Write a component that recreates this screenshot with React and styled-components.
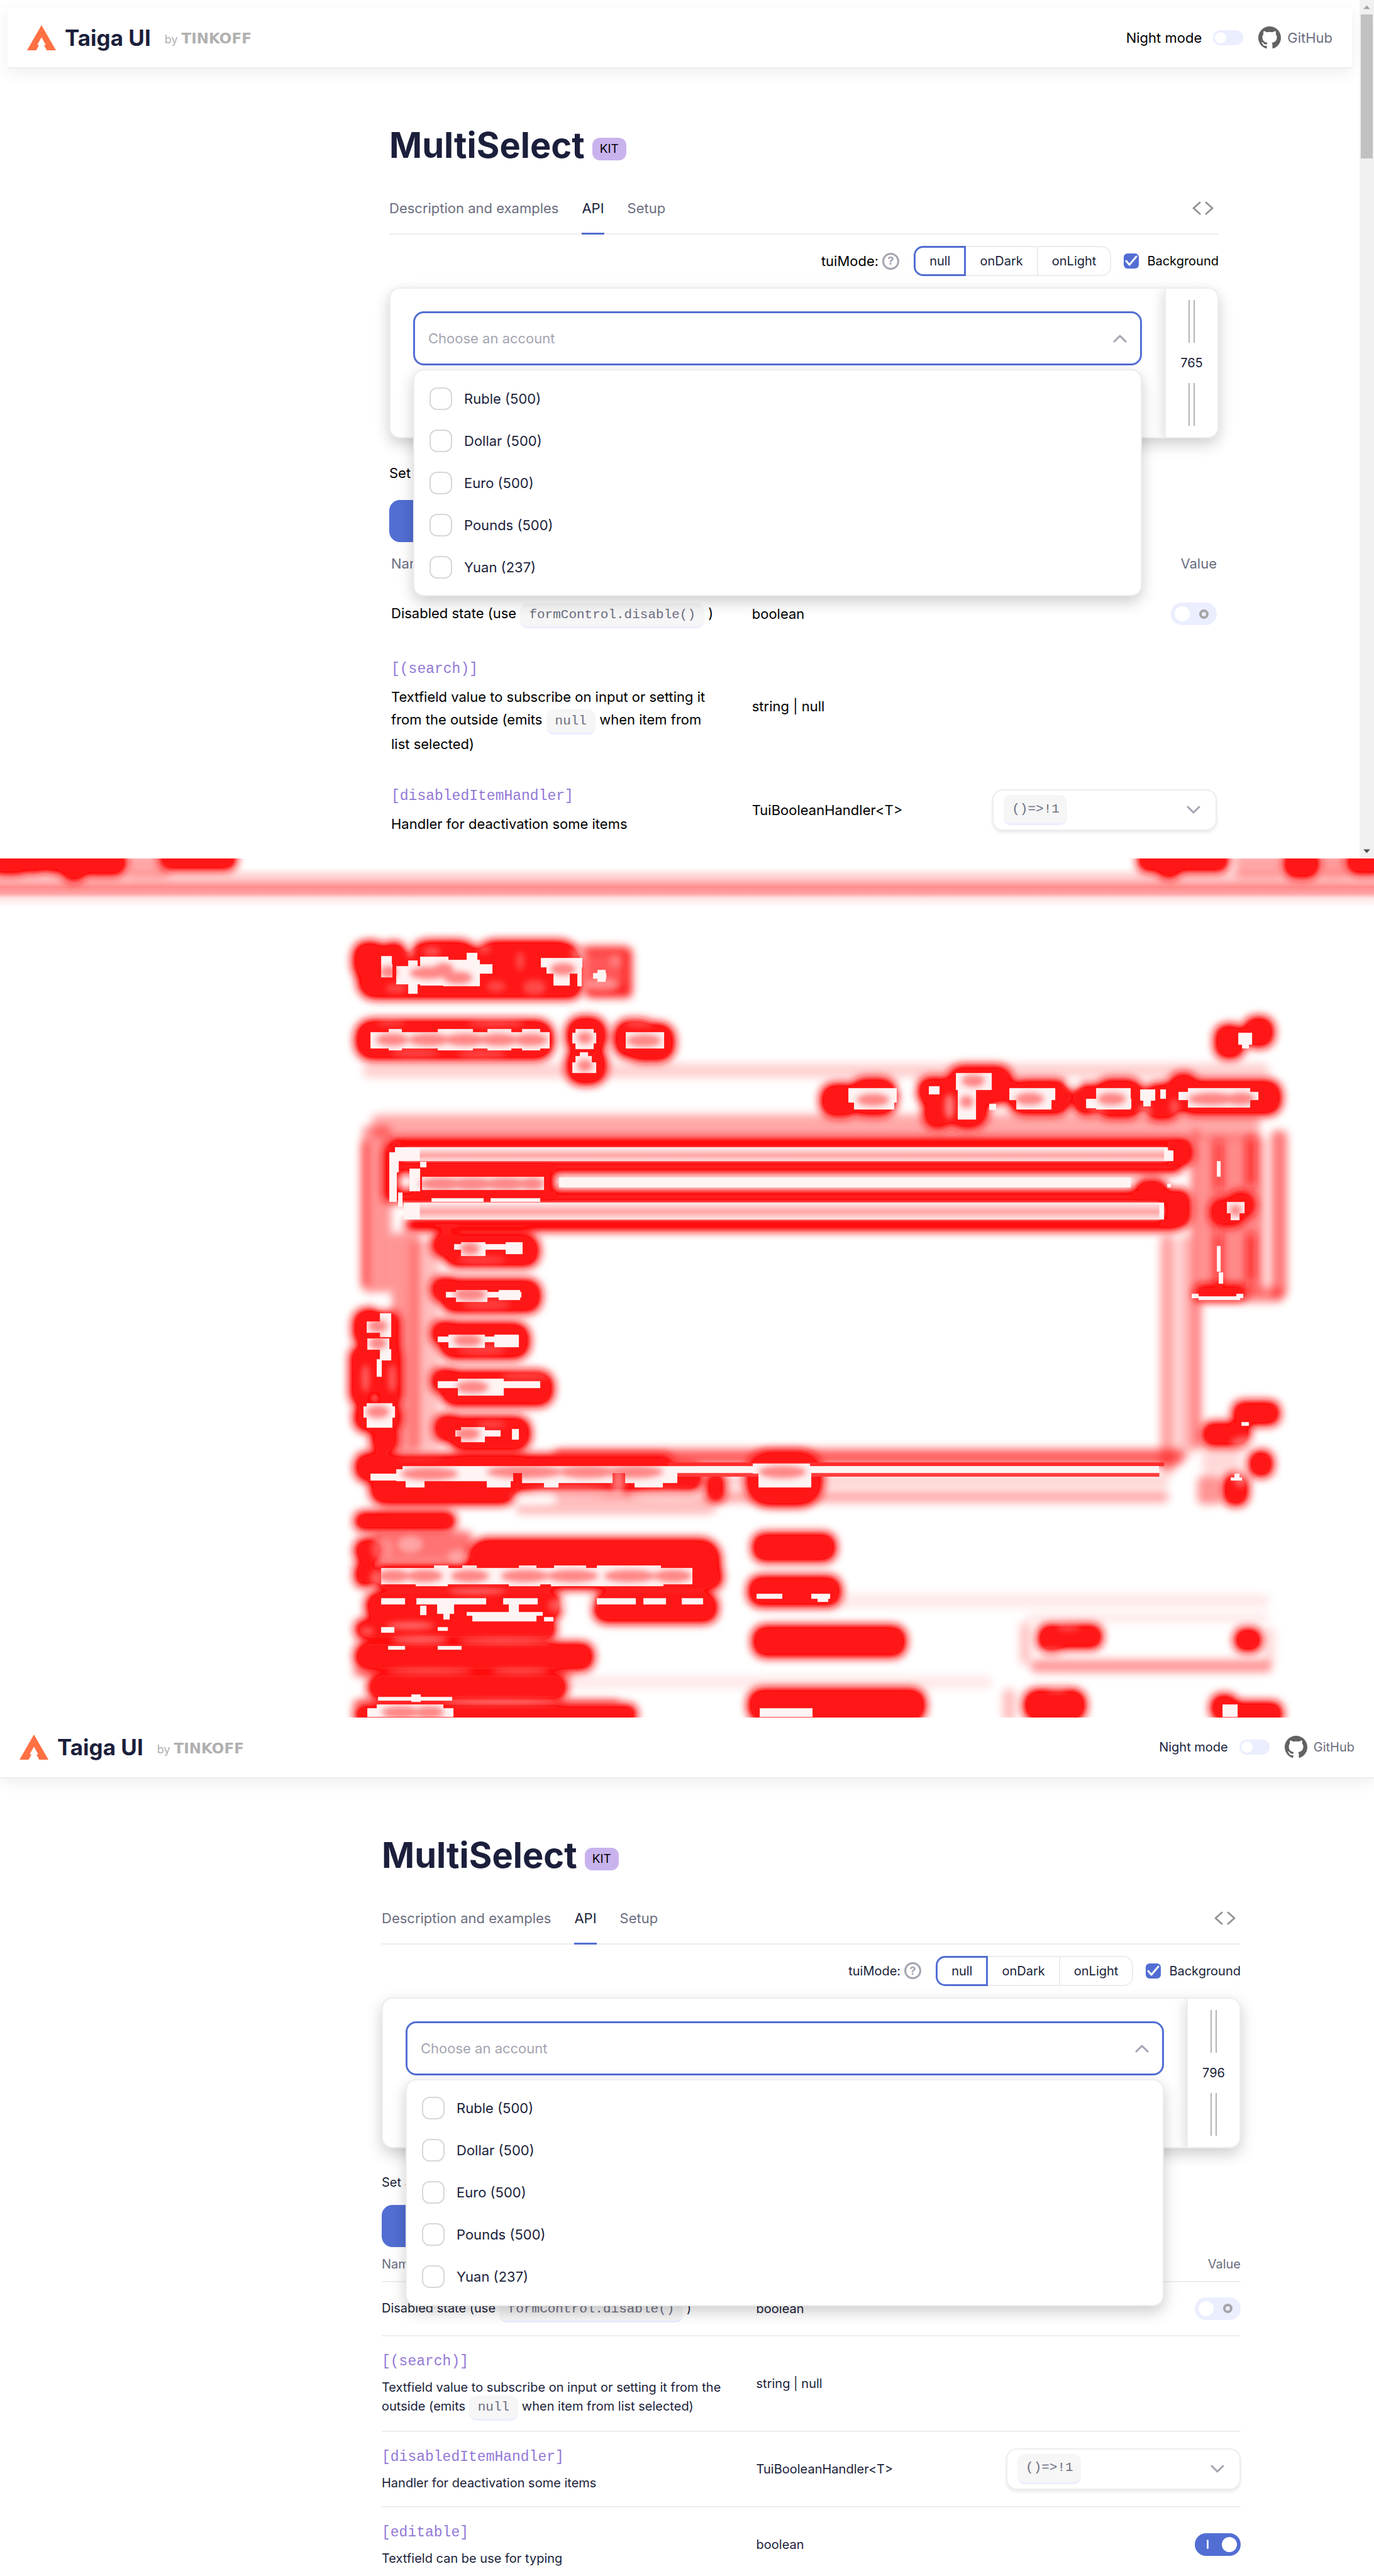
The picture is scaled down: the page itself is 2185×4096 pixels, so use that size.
import React, { useId } from "react";
import styled, { createGlobalStyle, css } from "styled-components";

const color = {
  ink: "#1b1f3b",
  muted: "#6b6e80",
  faint: "#a4a5b1",
  line: "#ededed",
  primary: "#526ed3",
  soft: "#ebeeff",
  purple: "#9278d6",
};

const sans = `Inter, "Open Sans", "Liberation Sans", sans-serif`;
const mono = `"Liberation Mono", "DejaVu Sans Mono", monospace`;

const GlobalStyle = createGlobalStyle`
  *, *::before, *::after { box-sizing: border-box; }
  html, body { margin: 0; background: #fff; }
  body { font-family: ${sans}; color: ${color.ink}; overflow: hidden; }
  input, button, select { font: inherit; margin: 0; }
`;

const Report = styled.main`
  display: grid;
  grid-template-rows: repeat(3, minmax(0, 1fr));
  height: 100vh;
  background: #fff;
`;

const Frame = styled.section`
  display: flex;
  min-height: 0;
  overflow: hidden;
  background: #fff;
`;

const Page = styled.div`
  flex: 1;
  min-width: 0;
`;

/* ---------- scrollbar ---------- */

const ScrollTrack = styled.div`
  flex: none;
  width: 23px;
  display: flex;
  flex-direction: column;
  align-items: center;
  justify-content: space-between;
  background: #f1f1f1;
`;

const ScrollTop = styled.div`
  display: grid;
  justify-items: center;
`;

const ScrollArrow = styled.svg`
  display: block;
  width: 23px;
  height: 23px;
`;

const ScrollThumb = styled.div`
  width: 19px;
  height: 229px;
  background: #c1c1c1;
`;

/* ---------- header ---------- */

const Header = styled.header`
  display: flex;
  align-items: center;
  height: 97px;
  margin: ${(p) => (p.$inset ? "12px 12px 0" : "0")};
  padding: 0 31px;
  background: #fff;
  border-bottom: 2px solid ${color.line};
  box-shadow: 0 6px 24px rgba(0, 0, 0, 0.07);
`;

const Brand = styled.a`
  display: flex;
  align-items: center;
  gap: 14px;
  color: ${color.ink};
  text-decoration: none;
  font-size: 35px;
  font-weight: 700;
  line-height: 40px;
`;

const BrandMark = styled.svg`
  width: 46px;
  height: 40px;
`;

const Owner = styled.span`
  display: flex;
  align-items: baseline;
  gap: 6px;
  margin-left: 8px;
  padding-top: 5px;
  color: #b0b0b0;
  font-size: 18px;
  font-weight: 400;
  line-height: 30px;
`;

const OwnerName = styled.b`
  font-family: "DejaVu Sans", sans-serif;
  font-size: 23px;
`;

const HeaderTools = styled.div`
  display: flex;
  align-items: center;
  margin-left: auto;
  font-size: ${(p) => (p.$compact ? 20 : 22)}px;
`;

const NightLabel = styled.label`
  display: flex;
  align-items: center;
  gap: 18px;
  color: ${(p) => (p.$compact ? color.ink : "#000")};
`;

const GitLink = styled.a`
  display: flex;
  align-items: center;
  gap: 10px;
  margin-left: 24px;
  color: ${color.muted};
  text-decoration: none;
`;

const GitMark = styled.svg`
  width: 36px;
  height: 36px;
  fill: #626262;
`;

const Switch = styled.input.attrs({ type: "checkbox", role: "switch" })`
  appearance: none;
  flex: none;
  display: flex;
  align-items: center;
  justify-content: space-between;
  border-radius: 18px;
  background: ${color.soft};
  &::before {
    content: "";
    border-radius: 50%;
    background: #fff;
  }
  ${(p) =>
    p.$small
      ? css`
          width: 48px;
          height: 24px;
          padding: 0 3px;
          &::before {
            width: 18px;
            height: 18px;
          }
        `
      : css`
          width: 73px;
          height: 36px;
          padding: 0 6px;
          &::before {
            width: 24px;
            height: 24px;
          }
          &::after {
            content: "";
            width: 15px;
            height: 15px;
            margin: 0 7px;
            border: 4px solid #a5a5a8;
            border-radius: 50%;
          }
        `}
  &:checked {
    background: ${color.primary};
    flex-direction: row-reverse;
  }
  &:checked::after {
    width: 3px;
    margin: 0 13px;
    border: 0;
    border-radius: 2px;
    background: #e3e8fb;
  }
`;

/* ---------- article ---------- */

const Article = styled.article`
  padding: 92px ${(p) => (p.$compact ? "212px 0 607px" : "224px 0 619px")};
`;

const TitleRow = styled.div`
  display: flex;
  align-items: flex-end;
  gap: 12px;
`;

const Title = styled.h1`
  margin: 0;
  font-size: 56px;
  font-weight: 700;
  line-height: 60px;
`;

const Badge = styled.span`
  margin-bottom: 6px;
  padding: 0 12px;
  border-radius: 12px;
  background: #c9b3ed;
  color: #000;
  font-size: 19px;
  line-height: 36px;
`;

const Tabs = styled.nav`
  display: flex;
  gap: 37px;
  height: 84px;
  margin-top: 28px;
  box-shadow: inset 0 -2px ${color.line};
  font-size: 22px;
`;

const Tab = styled.a`
  display: flex;
  align-items: center;
  text-decoration: none;
  color: ${(p) => (p.$active ? color.ink : color.muted)};
  box-shadow: ${(p) => (p.$active ? `inset 0 -3px ${color.primary}` : "none")};
`;

const CodeButton = styled.button`
  margin-left: auto;
  padding: 0 8px;
  border: 0;
  background: none;
  line-height: 0;
`;

const Icon = styled.svg`
  display: block;
  flex: none;
  fill: none;
  stroke: ${(p) => p.$stroke || color.faint};
  stroke-width: ${(p) => p.$weight || 3};
  stroke-linecap: round;
  stroke-linejoin: round;
`;

const ModeRow = styled.div`
  display: flex;
  align-items: center;
  justify-content: flex-end;
  height: 48px;
  margin: 18px 0;
  font-size: 20px;
`;

const ModeName = styled.span`
  display: flex;
  align-items: center;
  gap: 6px;
  margin-right: 23px;
  color: ${(p) => (p.$compact ? color.ink : "#000")};
  font-size: ${(p) => (p.$compact ? 20 : 22)}px;
`;

const Help = styled.span`
  display: grid;
  place-items: center;
  width: 27px;
  height: 27px;
  border: 3px solid ${color.faint};
  border-radius: 50%;
  color: ${color.faint};
  font-size: 18px;
  font-weight: 700;
  line-height: 18px;
`;

const Segments = styled.div`
  display: flex;
  height: 48px;
`;

const Segment = styled.label`
  display: flex;
  align-items: center;
  padding: 0 22px;
  border: 2px solid ${color.line};
  border-left-width: 0;
  &:first-child {
    border-radius: 15px 0 0 15px;
  }
  &:last-child {
    border-radius: 0 15px 15px 0;
  }
  &:has(:checked) {
    border: 3px solid ${color.primary};
  }
`;

const HiddenRadio = styled.input.attrs({ type: "radio" })`
  position: absolute;
  opacity: 0;
`;

const CheckLabel = styled.label`
  display: flex;
  align-items: center;
  gap: 13px;
  margin-left: 20px;
  color: ${(p) => (p.$compact ? color.ink : "#000")};
`;

const CheckMark = styled.span`
  display: grid;
  width: 24px;
  height: 24px;
  & > * {
    grid-area: 1 / 1;
  }
`;

const CheckInput = styled.input.attrs({ type: "checkbox" })`
  appearance: none;
  width: 24px;
  height: 24px;
  border-radius: 6px;
  background: ${color.primary};
`;

/* ---------- demo ---------- */

const Demo = styled.section`
  display: flex;
  height: 240px;
  border: 2px solid ${color.line};
  border-radius: 17px;
  background: #fff;
  box-shadow: 0 9px 24px rgba(0, 0, 0, 0.2);
`;

const DemoMain = styled.div`
  position: relative;
  flex: 1;
  padding: 36px;
`;

const Field = styled.label`
  display: flex;
  align-items: center;
  height: 86px;
  padding: 0 21px;
  border: 3px solid ${color.primary};
  border-radius: 17px;
`;

const FieldInput = styled.input`
  flex: 1;
  min-width: 0;
  padding: 0;
  border: 0;
  outline: 0;
  background: none;
  font-size: 22px;
  &::placeholder {
    color: ${color.faint};
    opacity: 1;
  }
`;

const Dropdown = styled.div`
  position: absolute;
  z-index: 2;
  top: 128px;
  left: 36px;
  right: 36px;
  padding: 11px 0;
  border: 2px solid ${color.line};
  border-radius: 17px;
  background: #fff;
  box-shadow: 0 9px 24px rgba(0, 0, 0, 0.2);
`;

const Option = styled.label`
  display: flex;
  align-items: center;
  gap: 19px;
  height: 67px;
  padding: 0 24px;
  font-size: 22px;
`;

const OptionBox = styled.input.attrs({ type: "checkbox" })`
  appearance: none;
  width: 36px;
  height: 36px;
  border: 2px solid #d8d8d8;
  border-radius: 12px;
  background: #fff;
`;

const Resizer = styled.aside`
  flex: none;
  display: flex;
  flex-direction: column;
  align-items: center;
  justify-content: space-between;
  width: 84px;
  padding: 18px 0;
  border-left: 2px solid ${color.line};
  border-radius: 0 15px 15px 0;
  background: #fff;
  box-shadow: -5px 4px 18px rgba(0, 0, 0, 0.12);
  clip-path: inset(0 0 0 -36px round 15px);
  font-size: 20px;
  line-height: 24px;
`;

const Grip = styled.span`
  width: 10px;
  height: 68px;
  border: solid #b4b4b4;
  border-width: 0 2px;
`;

/* ---------- api table ---------- */

const SetNote = styled.p`
  margin: ${(p) => (p.$compact ? "39px 0 21px" : "37px 0 25px")};
  color: ${(p) => (p.$compact ? color.ink : "#000")};
  font-size: ${(p) => (p.$compact ? 20 : 22)}px;
  line-height: ${(p) => (p.$compact ? 30 : 36)}px;
`;

const SetButton = styled.button`
  display: block;
  width: 360px;
  height: 67px;
  border: 0;
  border-radius: 17px;
  background: ${color.primary};
`;

const Table = styled.table`
  width: 100%;
  table-layout: fixed;
  border-collapse: collapse;
  color: ${(p) => (p.$compact ? color.ink : "#000")};
  font-size: ${(p) => (p.$compact ? 20 : 22)}px;
  line-height: ${(p) => (p.$compact ? 30 : 36)}px;
  th,
  td {
    padding: 0 ${(p) => (p.$compact ? 0 : 3)}px;
    text-align: left;
    vertical-align: middle;
    border-bottom: ${(p) => (p.$compact ? `2px solid ${color.line}` : "0")};
  }
  th {
    height: ${(p) => (p.$compact ? 55 : 68)}px;
    color: ${color.muted};
    font-weight: 400;
  }
  th:last-child {
    text-align: right;
  }
  th:first-child,
  td:first-child {
    padding-right: 48px;
  }
`;

const Row = styled.tr`
  height: ${(p) => p.$height}px;
`;

const PropName = styled.div`
  margin-bottom: 8px;
  color: ${color.purple};
  font-family: ${mono};
  font-size: 23px;
  line-height: 36px;
`;

const Code = styled.code`
  padding: 7px 14px;
  border-bottom: 3px solid ${color.soft};
  border-radius: 12px;
  background: #f6f6f6;
  color: ${color.muted};
  font-family: ${mono};
  font-size: 21px;
`;

const ValueSlot = styled.div`
  display: flex;
  justify-content: flex-end;
`;

const SelectBox = styled.label`
  flex: 1;
  display: flex;
  align-items: center;
  justify-content: space-between;
  height: 66px;
  padding: 0 24px 0 16px;
  border: 2px solid ${color.line};
  border-radius: 17px;
  box-shadow: 0 3px 5px rgba(0, 0, 0, 0.09);
`;

const CodeSelect = styled.select`
  appearance: none;
  width: 101px;
  height: 48px;
  padding: 0 13px;
  border: 0;
  border-bottom: 3px solid ${color.soft};
  border-radius: 12px;
  background: #f6f6f6;
  color: ${color.muted};
  font-family: ${mono};
  font-size: 21px;
`;

/* ---------- difference map ---------- */

const DiffSvg = styled.svg`
  display: block;
  width: 100%;
  height: 100%;
`;

/* Every entry is x, y, width, height on a 2880 x 1800 canvas. */
const hotSpots = [
  [-20, -20, 80, 54], [40, -20, 60, 50], [90, -20, 70, 50], [130, -20, 50, 68], [170, -20, 95, 56],
  [335, -24, 160, 48], [2385, -20, 190, 48], [2425, -20, 50, 62], [2690, -20, 76, 62], [2822, -20, 80, 54],
  [740, 174, 70, 80], [750, 210, 100, 84], [800, 176, 50, 100], [850, 172, 160, 120], [990, 172, 230, 118], [780, 230, 440, 64], [740, 190, 60, 60],
  [745, 338, 415, 84], [1187, 332, 84, 78], [1187, 394, 84, 80], [1287, 338, 90, 80], [1310, 345, 104, 80],
  [2546, 348, 62, 72], [2606, 332, 64, 64],
  [1720, 472, 80, 70], [1780, 460, 100, 80], [1924, 458, 70, 60], [1936, 500, 60, 66], [1985, 434, 138, 80], [1985, 470, 86, 96],
  [2114, 464, 130, 74], [2250, 474, 60, 64], [2292, 462, 106, 82], [2395, 472, 80, 76], [2450, 450, 60, 80], [2470, 464, 216, 74],
  [815, 586, 1680, 22], [805, 600, 28, 120], [830, 634, 1645, 24], [830, 697, 1645, 24], [850, 757, 1620, 22],
  [2455, 590, 46, 54], [2380, 674, 66, 44], [2440, 694, 56, 80],
  [870, 648, 290, 60],
  [906, 785, 60, 50], [930, 788, 200, 68], [904, 878, 60, 50], [924, 882, 210, 70], [904, 970, 60, 50], [920, 973, 190, 76],
  [904, 1070, 60, 50], [924, 1074, 236, 74], [910, 1166, 60, 56], [940, 1170, 172, 70],
  [740, 944, 70, 80], [734, 1024, 44, 120], [800, 1024, 42, 120], [766, 1020, 60, 100], [790, 950, 48, 190], [742, 1140, 100, 62], [778, 1190, 56, 56],
  [744, 1246, 70, 60], [776, 1284, 306, 70], [800, 1250, 610, 50], [1060, 1270, 410, 56], [1482, 1288, 36, 60], [1564, 1242, 160, 116],
  [744, 1370, 210, 38], [744, 1426, 56, 50], [744, 1476, 40, 50], [980, 1426, 530, 100], [784, 1480, 730, 52],
  [767, 1538, 410, 58], [1244, 1538, 260, 64], [745, 1596, 420, 40], [744, 1644, 500, 58],
  [772, 1710, 416, 54], [744, 1774, 590, 40],
  [1577, 1414, 175, 60], [1568, 1504, 195, 64], [1577, 1608, 322, 66], [1568, 1740, 372, 70],
  [2584, 1138, 98, 50], [2520, 1182, 100, 50], [2618, 1242, 50, 54], [2564, 1290, 52, 66],
  [2176, 1606, 56, 58], [2210, 1606, 100, 50], [2588, 1614, 56, 48], [2146, 1742, 130, 66], [2538, 1752, 56, 56], [2574, 1768, 114, 50],
  [2536, 712, 74, 60], [2572, 698, 58, 56], [2550, 590, 9, 106], [2616, 584, 11, 104], [2550, 784, 9, 126], [2616, 784, 11, 106],
  [2506, 894, 106, 30],
];

const warmSpots = [
  [760, 560, 60, 350, 0.42], [757, 590, 14, 310, 0.6], [780, 536, 1860, 50, 0.34], [820, 784, 60, 460, 0.42],
  [2432, 790, 30, 500, 0.36], [2470, 790, 26, 470, 0.26], [2496, 570, 22, 670, 0.5],
  [2520, 580, 130, 330, 0.46], [2664, 570, 34, 350, 0.52], [2500, 900, 190, 30, 0.5],
  [1225, 184, 100, 108, 0.66], [1230, 270, 90, 22, 0.6], [1306, 190, 18, 100, 0.6], [1210, 184, 100, 14, 0.5],
  [860, 800, 60, 440, 0.25], [1160, 1238, 1320, 34, 0.62], [1160, 1296, 1290, 20, 0.2],
  [760, 430, 1900, 30, 0.18], [1730, 1542, 930, 28, 0.09], [980, 1714, 1100, 26, 0.09],
  [2160, 1680, 506, 26, 0.42], [2138, 1600, 22, 90, 0.24], [2650, 1610, 22, 80, 0.14], [2150, 1584, 510, 16, 0.1],
  [2102, 1740, 26, 70, 0.26], [2510, 1294, 50, 60, 0.42], [1160, 1326, 1290, 24, 0.34], [1080, 1354, 420, 20, 0.28],
  [780, 1410, 210, 64, 0.55], [780, 1600, 180, 40, 0.6], [740, 1700, 460, 14, 0.6], [740, 1764, 560, 14, 0.6],
  [265, -10, 90, 50, 0.35], [2588, -10, 100, 50, 0.35], [2766, -10, 60, 50, 0.4],
  [2520, 1200, 80, 90, 0.15],
];

/* Lighter mottling inside the hot areas: cx, cy, rx, ry, opacity. */
const mottles = [
  [860, 185, 8, 22, 0.5], [905, 195, 18, 10, 0.25], [1015, 190, 14, 10, 0.2], [1090, 215, 10, 20, 0.2], [1120, 270, 24, 16, 0.22],
  [1040, 268, 20, 12, 0.2], [830, 272, 22, 10, 0.2], [1210, 200, 14, 12, 0.3], [1262, 265, 34, 14, 0.35], [1290, 215, 14, 14, 0.2],
  [870, 408, 50, 10, 0.18], [1010, 410, 50, 10, 0.18], [1040, 345, 60, 8, 0.2], [820, 344, 30, 8, 0.16], [1340, 346, 30, 8, 0.2],
  [1900, 478, 14, 16, 0.5], [1900, 515, 14, 14, 0.3], [1990, 520, 10, 26, 0.45], [2250, 470, 18, 12, 0.6], [2400, 530, 14, 14, 0.3],
  [2462, 520, 10, 16, 0.25], [2300, 530, 18, 10, 0.2],
  [1010, 842, 50, 10, 0.16], [1020, 935, 50, 12, 0.16], [1010, 1030, 50, 12, 0.16], [1100, 1085, 50, 10, 0.16], [1030, 1186, 30, 8, 0.2],
  [766, 1090, 8, 30, 0.32], [822, 1090, 8, 30, 0.3], [800, 930, 20, 16, 0.4],
  [880, 1258, 50, 6, 0.1], [1120, 1340, 50, 16, 0.3], [1200, 1330, 90, 14, 0.35], [1296, 1310, 12, 30, 0.4], [1400, 1336, 80, 14, 0.35],
  [860, 1438, 26, 18, 0.35], [800, 1448, 22, 24, 0.25], [960, 1462, 22, 14, 0.3], [790, 1508, 14, 16, 0.3],
  [1000, 1536, 60, 7, 0.3], [1170, 1566, 22, 14, 0.25], [1210, 1560, 40, 20, 0.3], [860, 1608, 50, 8, 0.35], [770, 1620, 14, 8, 0.3],
  [1060, 1640, 100, 6, 0.35], [880, 1638, 60, 7, 0.4], [900, 1704, 90, 5, 0.35], [1090, 1704, 60, 5, 0.35], [1050, 1768, 120, 5, 0.4],
  [2610, 1225, 30, 14, 0.3], [2600, 1300, 14, 18, 0.3], [2200, 1664, 30, 8, 0.3], [2240, 1612, 24, 8, 0.2], [2216, 1742, 22, 6, 0.3],
];

const ridges = [
  [799, 222, 24, 28], [799, 205, 22, 40], [830, 226, 60, 38], [855, 214, 20, 70], [880, 206, 60, 60], [930, 212, 76, 56], [978, 198, 22, 40], [1000, 222, 32, 20],
  [1134, 208, 87, 20], [1145, 218, 70, 24], [1160, 240, 34, 26], [1210, 212, 10, 56], [1243, 240, 28, 12], [1252, 234, 18, 24],
  [776, 364, 376, 34], [815, 358, 28, 44], [918, 358, 74, 44], [1022, 358, 50, 44], [1094, 358, 38, 44],
  [1206, 358, 38, 42], [1200, 366, 50, 22], [1216, 406, 16, 18], [1206, 414, 34, 22], [1200, 428, 50, 22], [1312, 364, 80, 34],
  [2596, 366, 28, 24], [2604, 388, 14, 10], [1778, 482, 102, 30], [1790, 496, 84, 30], [1947, 477, 22, 18], [2003, 450, 76, 36], [2008, 484, 38, 64], [2074, 514, 14, 14],
  [2116, 482, 96, 24], [2130, 496, 74, 30], [2276, 504, 96, 20], [2298, 482, 72, 44], [2390, 484, 32, 24], [2396, 506, 16, 14], [2432, 484, 12, 20], [2470, 490, 168, 16], [2490, 482, 130, 40],
  [828, 605, 1620, 29], [816, 616, 16, 104], [824, 634, 12, 24], [834, 700, 10, 30], [880, 636, 14, 12], [858, 650, 22, 48], [1172, 668, 1198, 22], [884, 667, 256, 28],
  [846, 722, 1594, 35], [2446, 612, 14, 22], [2446, 682, 8, 8], [904, 712, 110, 8], [1028, 712, 104, 8],
  [952, 808, 144, 12], [966, 804, 52, 30], [1060, 804, 36, 26], [935, 908, 158, 12], [956, 904, 66, 26], [1046, 904, 44, 22],
  [917, 1002, 170, 12], [940, 998, 76, 28], [1036, 998, 52, 26],
  [917, 1096, 216, 14], [960, 1090, 96, 36], [955, 1198, 94, 14], [966, 1192, 50, 32], [1073, 1196, 14, 22],
  [768, 970, 52, 24], [796, 954, 24, 50], [770, 1006, 46, 24], [796, 1028, 24, 24], [790, 1050, 10, 36], [762, 1148, 66, 24], [768, 1142, 54, 52],
  [844, 1274, 1586, 14], [776, 1290, 60, 14], [830, 1280, 246, 26], [850, 1306, 40, 12], [1020, 1306, 50, 12], [1094, 1284, 190, 26], [1140, 1308, 30, 10], [1310, 1284, 110, 26], [1330, 1308, 60, 10],
  [1578, 1268, 120, 22], [1590, 1284, 110, 34],
  [799, 1488, 652, 34], [910, 1482, 30, 12], [969, 1482, 30, 12], [1088, 1482, 36, 12], [1162, 1482, 66, 12], [1251, 1482, 134, 12], [872, 1518, 66, 8], [1066, 1518, 66, 8], [1155, 1518, 236, 8],
  [799, 1550, 50, 14], [873, 1550, 146, 14], [1055, 1550, 72, 14], [1251, 1550, 82, 14], [1348, 1550, 48, 14], [1429, 1550, 45, 14],
  [880, 1566, 14, 20], [916, 1564, 36, 20], [930, 1580, 12, 16], [1066, 1562, 22, 20], [990, 1580, 134, 20], [978, 1580, 160, 8], [1140, 1590, 20, 10],
  [799, 1611, 28, 12], [917, 1611, 22, 8], [813, 1651, 36, 8], [917, 1651, 50, 8],
  [792, 1758, 156, 8], [862, 1752, 20, 16], [770, 1782, 180, 18], [790, 1774, 140, 12], [1586, 1542, 54, 10], [1700, 1542, 40, 10], [1714, 1550, 22, 8], [1593, 1782, 110, 18],
  [2551, 635, 7, 32], [2551, 812, 7, 54], [2572, 720, 36, 24], [2580, 742, 18, 16], [2554, 868, 10, 24], [2512, 918, 88, 8], [2498, 912, 14, 10], [2592, 912, 14, 10],
  [2602, 1182, 16, 8], [2588, 1290, 10, 14], [2580, 1298, 24, 6], [2562, 1774, 32, 26],
];

const glow = [
  [899, 240, 40], [930, 232, 20], [1180, 232, 26], [960, 250, 30], [815, 238, 18], [822, 380, 34], [900, 380, 44], [975, 380, 44],
  [1045, 380, 40], [1112, 380, 36], [1226, 376, 16], [1226, 434, 16], [1350, 382, 36], [1830, 506, 34], [2040, 466, 24], [2026, 510, 14], [2158, 504, 30],
  [2330, 504, 30], [2540, 504, 50], [2600, 504, 30], [925, 682, 46], [990, 682, 46], [1060, 682, 46], [1115, 682, 26],
  [985, 818, 20], [985, 914, 34], [980, 1010, 30], [990, 1108, 34], [980, 1206, 26], [792, 980, 20], [792, 1160, 24], [792, 1016, 18],
  [1100, 1286, 80], [1230, 1286, 60], [900, 1290, 60], [1330, 1286, 60], [1640, 1286, 50], [825, 1504, 34], [890, 1504, 38], [985, 1504, 40],
  [1100, 1504, 50], [1200, 1504, 54], [1320, 1504, 54], [1410, 1504, 40], [840, 1790, 40], [900, 1790, 30], [2590, 738, 12],
];

function DifferenceMap() {
  return (
    <DiffSvg viewBox="0 0 2880 1800" preserveAspectRatio="none" role="img" aria-label="Difference map">
      <defs>
        <filter id="spread" x="-5%" y="-5%" width="110%" height="110%">
          <feGaussianBlur stdDeviation="10" />
          <feComponentTransfer>
            <feFuncA type="linear" slope="1.45" />
          </feComponentTransfer>
        </filter>
        <filter id="soft" x="-5%" y="-5%" width="110%" height="110%">
          <feGaussianBlur stdDeviation="9" />
        </filter>
        <filter id="tint" x="-5%" y="-5%" width="110%" height="110%">
          <feGaussianBlur stdDeviation="6" />
        </filter>
        <linearGradient id="edge" x1="0" y1="0" x2="0" y2="1">
          <stop offset="0" stopColor="#ff0000" stopOpacity="0" />
          <stop offset="0.3" stopColor="#ff0000" stopOpacity="0.22" />
          <stop offset="0.5" stopColor="#ff0000" stopOpacity="0.45" />
          <stop offset="0.66" stopColor="#ff0000" stopOpacity="0.36" />
          <stop offset="0.78" stopColor="#ff0000" stopOpacity="0.1" />
          <stop offset="1" stopColor="#ff0000" stopOpacity="0" />
        </linearGradient>
        <linearGradient id="stripe" x1="0" y1="0" x2="0" y2="1">
          <stop offset="0" stopColor="#ff0000" stopOpacity="0.04" />
          <stop offset="0.55" stopColor="#ff0000" stopOpacity="0.32" />
          <stop offset="1" stopColor="#ff0000" stopOpacity="0.08" />
        </linearGradient>
        <clipPath id="ridgeArea">
          {ridges.map(([x, y, w, h], i) => (
            <rect key={i} x={x} y={y} width={w} height={h} />
          ))}
        </clipPath>
      </defs>
      <rect x="0" y="18" width="2880" height="84" fill="url(#edge)" />
      <g filter="url(#soft)" fill="#ff0000">
        {warmSpots.map(([x, y, w, h, o], i) => (
          <rect key={i} x={x} y={y} width={w} height={h} rx="12" opacity={o} />
        ))}
      </g>
      <g filter="url(#spread)" fill="#ff1212">
        {hotSpots.map(([x, y, w, h], i) => (
          <rect key={i} x={x} y={y} width={w} height={h} rx={Math.min(w, h) / 2.4} />
        ))}
      </g>
      <rect x="1400" y="1266" width="1040" height="8" fill="#ff2c2c" />
      <rect x="1400" y="1288" width="1030" height="8" fill="#ff3c3c" />
      <g filter="url(#tint)" fill="#ffffff">
        {mottles.map(([x, y, rx, ry, o], i) => (
          <ellipse key={i} cx={x} cy={y} rx={rx} ry={ry} opacity={o} />
        ))}
      </g>
      <g fill="#fff4f4" shapeRendering="crispEdges">
        {ridges.map(([x, y, w, h], i) => (
          <rect key={i} x={x} y={y} width={w} height={h} />
        ))}
      </g>
      <g clipPath="url(#ridgeArea)">
        <rect x="880" y="607" width="1560" height="28" fill="url(#stripe)" />
        <rect x="880" y="722" width="1550" height="34" fill="url(#stripe)" />
        <g filter="url(#tint)" fill="#ff2a2a" opacity="0.55">
          {glow.map(([x, y, r], i) => (
            <ellipse key={i} cx={x} cy={y} rx={r} ry="13" />
          ))}
        </g>
      </g>
    </DiffSvg>
  );
}

/* ---------- shared pieces ---------- */

const accounts = ["Ruble (500)", "Dollar (500)", "Euro (500)", "Pounds (500)", "Yuan (237)"];

function Chevron({ up }) {
  return (
    <Icon width="22" height="14" viewBox="0 0 22 14" aria-hidden="true">
      <path d={up ? "M2 12 11 3l9 9" : "M2 2l9 9 9-9"} />
    </Icon>
  );
}

function SiteHeader({ compact }) {
  return (
    <Header $inset={!compact}>
      <Brand href="#home">
        <BrandMark viewBox="0 0 60 52" aria-hidden="true">
          <path fill="#ff7043" d="M30 0 60 52H41L35 41H39L30 25 21 41H25L19 52H0Z" />
        </BrandMark>
        Taiga UI
        <Owner>
          by <OwnerName>TINKOFF</OwnerName>
        </Owner>
      </Brand>
      <HeaderTools $compact={compact}>
        <NightLabel $compact={compact}>
          Night mode
          <Switch $small />
        </NightLabel>
        <GitLink href="#github">
          <GitMark viewBox="0 0 16 16" aria-hidden="true">
            <path d="M8 0C3.58 0 0 3.58 0 8c0 3.54 2.29 6.53 5.47 7.59.4.07.55-.17.55-.38 0-.19-.01-.82-.01-1.49-2.01.37-2.53-.49-2.69-.94-.09-.23-.48-.94-.82-1.13-.28-.15-.68-.52-.01-.53.63-.01 1.08.58 1.23.82.72 1.21 1.87.87 2.33.66.07-.52.28-.87.51-1.07-1.78-.2-3.64-.89-3.64-3.95 0-.87.31-1.59.82-2.15-.08-.2-.36-1.02.08-2.12 0 0 .67-.21 2.2.82.64-.18 1.32-.27 2-.27s1.36.09 2 .27c1.53-1.04 2.2-.82 2.2-.82.44 1.1.16 1.92.08 2.12.51.56.82 1.27.82 2.15 0 3.07-1.87 3.75-3.65 3.95.29.25.54.73.54 1.48 0 1.07-.01 1.93-.01 2.2 0 .21.15.46.55.38A8.013 8.013 0 0016 8c0-4.42-3.58-8-8-8z" />
          </GitMark>
          GitHub
        </GitLink>
      </HeaderTools>
    </Header>
  );
}

function ModePicker({ compact }) {
  const group = useId();
  return (
    <ModeRow>
      <ModeName $compact={compact}>
        tuiMode: <Help>?</Help>
      </ModeName>
      <Segments role="radiogroup" aria-label="tuiMode">
        {["null", "onDark", "onLight"].map((mode, i) => (
          <Segment key={mode}>
            <HiddenRadio name={group} defaultChecked={i === 0} />
            {mode}
          </Segment>
        ))}
      </Segments>
      <CheckLabel $compact={compact}>
        <CheckMark>
          <CheckInput defaultChecked />
          <Icon width="24" height="24" viewBox="0 0 24 24" $stroke="#fff" aria-hidden="true">
            <path d="M4 12l5 6L20 5" />
          </Icon>
        </CheckMark>
        Background
      </CheckLabel>
    </ModeRow>
  );
}

function DemoCard({ width }) {
  return (
    <Demo>
      <DemoMain>
        <Field>
          <FieldInput placeholder="Choose an account" aria-label="Choose an account" />
          <Chevron up />
        </Field>
        <Dropdown>
          {accounts.map((name) => (
            <Option key={name}>
              <OptionBox />
              {name}
            </Option>
          ))}
        </Dropdown>
      </DemoMain>
      <Resizer>
        <Grip />
        <output>{width}</output>
        <Grip />
      </Resizer>
    </Demo>
  );
}

function HandlerSelect() {
  return (
    <ValueSlot>
      <SelectBox>
        <CodeSelect aria-label="disabledItemHandler value">
          <option>{"()=>!1"}</option>
        </CodeSelect>
        <Chevron />
      </SelectBox>
    </ValueSlot>
  );
}

function ApiTable({ compact }) {
  const heights = compact ? [86, 152, 120, 120] : [92, 202, 128];
  return (
    <Table $compact={compact}>
      <colgroup>
        <col style={{ width: compact ? "43.6%" : "43.5%" }} />
        <col style={{ width: compact ? "29.1%" : "29%" }} />
        <col />
      </colgroup>
      <thead>
        <tr>
          <th scope="col">Name</th>
          <th scope="col" aria-label="Type" />
          <th scope="col">Value</th>
        </tr>
      </thead>
      <tbody>
        <Row $height={heights[0]}>
          <td>
            Disabled state (use <Code>formControl.disable()</Code> )
          </td>
          <td>boolean</td>
          <td>
            <ValueSlot>
              <Switch aria-label="Disabled state" />
            </ValueSlot>
          </td>
        </Row>
        <Row $height={heights[1]}>
          <td>
            <PropName>[(search)]</PropName>
            Textfield value to subscribe on input or setting it from the outside (emits <Code>null</Code> when
            item from list selected)
          </td>
          <td>string | null</td>
          <td />
        </Row>
        <Row $height={heights[2]}>
          <td>
            <PropName>[disabledItemHandler]</PropName>
            Handler for deactivation some items
          </td>
          <td>{"TuiBooleanHandler<T>"}</td>
          <td>
            <HandlerSelect />
          </td>
        </Row>
        {compact && (
          <Row $height={heights[3]}>
            <td>
              <PropName>[editable]</PropName>
              Textfield can be use for typing
            </td>
            <td>boolean</td>
            <td>
              <ValueSlot>
                <Switch defaultChecked aria-label="editable" />
              </ValueSlot>
            </td>
          </Row>
        )}
      </tbody>
    </Table>
  );
}

function DocPage({ compact, width }) {
  return (
    <Page>
      <SiteHeader compact={compact} />
      <Article $compact={compact}>
        <TitleRow>
          <Title>MultiSelect</Title>
          <Badge>KIT</Badge>
        </TitleRow>
        <Tabs>
          <Tab href="#examples">Description and examples</Tab>
          <Tab href="#api" $active aria-current="page">API</Tab>
          <Tab href="#setup">Setup</Tab>
          <CodeButton aria-label="Source code">
            <Icon width="34" height="22" viewBox="0 0 34 22" $stroke="#959595" aria-hidden="true">
              <path d="M12 2 2 11l10 9M22 2l10 9-10 9" />
            </Icon>
          </CodeButton>
        </Tabs>
        <ModePicker compact={compact} />
        <DemoCard width={width} />
        <SetNote $compact={compact}>{compact ? "Set a" : "Set"}</SetNote>
        <SetButton aria-label="Set" />
        <ApiTable compact={compact} />
      </Article>
    </Page>
  );
}

export default function App() {
  return (
    <>
      <GlobalStyle />
      <Report>
        <Frame>
          <DocPage width={765} />
          <ScrollTrack>
            <ScrollTop>
              <ScrollArrow viewBox="0 0 30 30" aria-hidden="true">
                <path fill="#a3a3a3" d="M8 19h14L15 11z" />
              </ScrollArrow>
              <ScrollThumb />
            </ScrollTop>
            <ScrollArrow viewBox="0 0 30 30" aria-hidden="true">
              <path fill="#505050" d="M8 11h14l-7 8z" />
            </ScrollArrow>
          </ScrollTrack>
        </Frame>
        <Frame>
          <DifferenceMap />
        </Frame>
        <Frame>
          <DocPage compact width={796} />
        </Frame>
      </Report>
    </>
  );
}
